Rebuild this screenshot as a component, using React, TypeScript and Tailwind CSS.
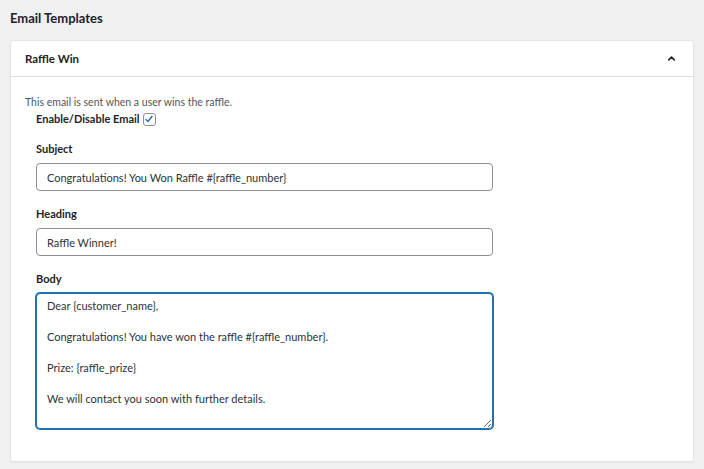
import { ChevronUp } from "lucide-react";

const font = { fontFamily: 'Lato, "Noto Sans", sans-serif' };

function Field({ label, value }: { label: string; value: string }) {
    return (
        <div className="flex flex-col">
            <label className="text-[11px] font-bold text-[#1d2327] leading-[16px]">
                {label}
            </label>
            <input
                readOnly
                value={value}
                style={font}
                className="mt-[6px] h-[28px] w-[457px] rounded-[4px] border border-[#8c8f94] bg-white px-[10px] text-[11px] text-[#2c3338] outline-none"
            />
        </div>
    );
}

export default function App() {
    const body =
        "Dear {customer_name},\n\nCongratulations! You have won the raffle #{raffle_number}.\n\nPrize: {raffle_prize}\n\nWe will contact you soon with further details.";

    return (
        <div className="min-h-[469px] bg-[#f0f0f1] px-[10px] pt-[9px] pb-[12px]" style={font}>
            <h2 className="text-[13px] font-bold leading-[18px] text-[#1d2327]">
                Email Templates
            </h2>
            <div className="mt-[13px] rounded-[3px] border border-[#e5e5e5] bg-white shadow-[0_1px_1px_rgba(0,0,0,0.04)]">
                <div className="flex h-[36px] items-center justify-between border-b border-[#e0e0e0] px-[14px]">
                    <span className="text-[11.5px] font-bold text-[#1d2327]">Raffle Win</span>
                    <ChevronUp className="mr-[2px] h-[11px] w-[11px] text-[#1d2327]" strokeWidth={3.5} />
                </div>
                <div className="px-[14px] pt-[18px] pb-[32px]">
                    <p className="text-[10.5px] leading-[14px] text-[#50575e]">
                        This email is sent when a user wins the raffle.
                    </p>
                    <div className="ml-[11px] mt-[3px] flex h-[14px] items-center gap-[3px]">
                        <span className="text-[11px] font-bold leading-[14px] text-[#1d2327]">
                            Enable/Disable Email
                        </span>
                        <span className="flex h-[13px] w-[13px] items-center justify-center rounded-[3px] border border-[#8c8f94] bg-white">
                            <svg viewBox="0 0 12 12" className="h-[10px] w-[10px]">
                                <path d="M2 6.3 L4.8 9 L10 2.5" fill="none" stroke="#2271b1" strokeWidth="1.8" />
                            </svg>
                        </span>
                    </div>
                    <div className="ml-[11px] mt-[15px] flex flex-col gap-[15px]">
                        <Field label="Subject" value="Congratulations! You Won Raffle #{raffle_number}" />
                        <Field label="Heading" value="Raffle Winner!" />
                        <div className="flex flex-col">
                            <label className="text-[11px] font-bold text-[#1d2327] leading-[16px]">
                                Body
                            </label>
                            <textarea
                                readOnly
                                value={body}
                                style={font}
                                className="mt-[6px] h-[136px] w-[457px] resize-y rounded-[4px] border border-[#2271b1] bg-white px-[10px] py-[4px] text-[11px] leading-[15.5px] text-[#2c3338] shadow-[0_0_0_1px_#2271b1] outline-none"
                            />
                        </div>
                    </div>
                </div>
            </div>
        </div>
    );
}
